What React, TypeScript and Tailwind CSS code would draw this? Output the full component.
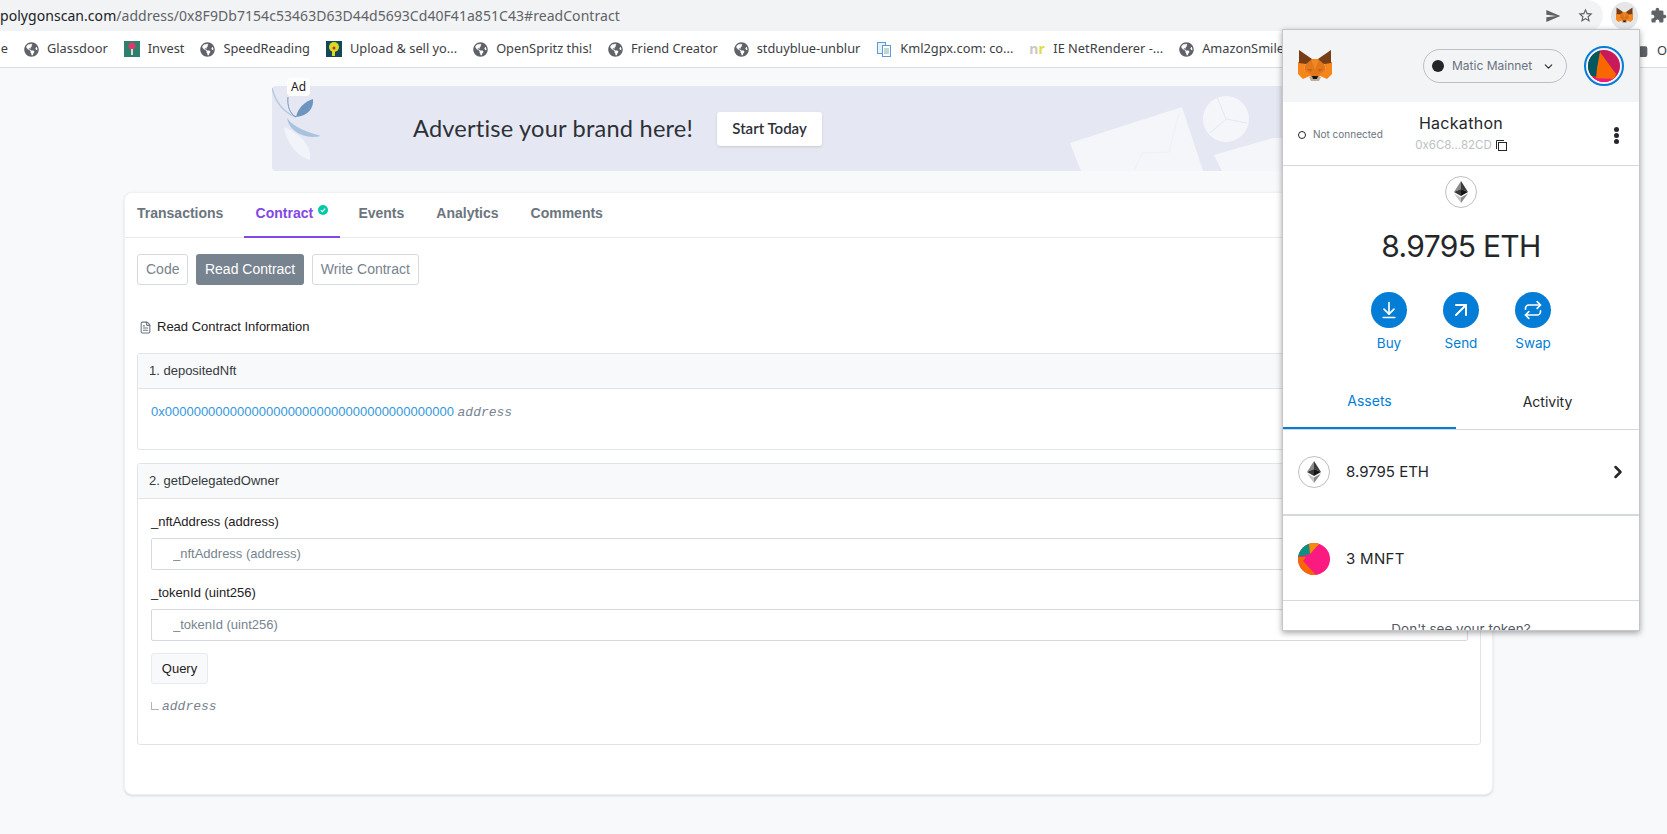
import { ArrowDownToLine, ArrowUpRight, ChevronDown, ChevronRight, FileText, Folder, Repeat } from "lucide-react";
import { FaGlobeAmericas } from "react-icons/fa";

const mainTabs = ["Events", "Analytics", "Comments"];

function Globe() {
  return <FaGlobeAmericas className="w-[15px] h-[15px] shrink-0 text-[#5f6368]" />;
}

function Fox({ size }: { size: number }) {
  return (
    <svg width={size} height={size} viewBox="0 0 34 32">
      <polygon points="13,9 21,9 26,12 28,20 21,27 13,27 6,20 8,12" fill="#e2761b" />
      <polygon points="0,12 8,12 6,20 14,25 5,29 0,24" fill="#f6851b" />
      <polygon points="34,12 26,12 28,20 20,25 29,29 34,24" fill="#f6851b" />
      <polygon points="13,9 17,20 21,9" fill="#f0881f" />
      <polygon points="1,0 14,9 8,14 1,13" fill="#763d16" />
      <polygon points="33,0 20,9 26,14 33,13" fill="#763d16" />
      <polygon points="9,19 14,19 13,22" fill="#cd6116" />
      <polygon points="25,19 20,19 21,22" fill="#cd6116" />
      <polygon points="11,27 23,27 21,31 13,31" fill="#c0ad9e" />
      <polygon points="14,26 20,26 19,29 15,29" fill="#161616" />
    </svg>
  );
}

function EthLogo() {
  return (
    <svg width="14" height="22" viewBox="0 0 14 22">
      <polygon points="7,0 0,11 7,8" fill="#8a8a8a" />
      <polygon points="7,0 14,11 7,8" fill="#3c3c3b" />
      <polygon points="0,11 7,15 7,8" fill="#393939" />
      <polygon points="14,11 7,15 7,8" fill="#141414" />
      <polygon points="0,12.5 7,22 7,16.5" fill="#c5c5c5" />
      <polygon points="14,12.5 7,22 7,16.5" fill="#8a8a8a" />
    </svg>
  );
}

function EthBadge() {
  return (
    <div className="w-8 h-8 rounded-full border border-[#bbc0c5] flex items-center justify-center">
      <EthLogo />
    </div>
  );
}

function ActionButton({ label, children }: { label: string; children: React.ReactNode }) {
  return (
    <div className="w-9 flex flex-col items-center">
      <div className="w-9 h-9 rounded-full bg-[#037dd6] flex items-center justify-center text-white">{children}</div>
      <span className="mt-[5px] text-[13.5px] leading-5 text-[#037dd6]">{label}</span>
    </div>
  );
}

function BrowserBar() {
  return (
    <div className="h-[31px] flex items-center bg-white">
      <div className="w-[1604px] h-full bg-[#f1f3f4] rounded-r-[16px] flex items-center overflow-hidden relative">
        <span className="text-[14px] tracking-[0.05px] text-[#5f6368] font-['Noto_Sans',sans-serif] whitespace-nowrap">
          <span className="text-[#202124]">polygonscan.com</span>/address/0x8F9Db7154c53463D63D44d5693Cd40F41a851C43#readContract
        </span>
        <div className="ml-auto mr-[9px] flex items-center gap-4">
          <svg width="16" height="16" viewBox="0 0 24 24" fill="#5f6368">
            <path d="M2.01 21L23 12 2.01 3 2 10l15 2-15 2z" />
          </svg>
          <svg width="17" height="17" viewBox="0 0 24 24" fill="#5f6368">
            <path d="M22 9.24l-7.19-.62L12 2 9.19 8.63 2 9.24l5.46 4.73L5.82 21 12 17.27 18.18 21l-1.63-7.03L22 9.24zM12 15.4l-3.76 2.27 1-4.28-3.32-2.88 4.38-.38L12 6.1l1.71 4.04 4.38.38-3.32 2.88 1 4.28L12 15.4z" />
          </svg>
        </div>
      </div>
      <div className="ml-2 w-[27px] h-[28px] rounded-full bg-[#e4e6e8] flex items-center justify-center">
        <Fox size={17} />
      </div>
      <svg className="ml-[12px]" width="17" height="17" viewBox="0 0 24 24" fill="#5f6368">
        <path d="M20.5 11H19V7c0-1.1-.9-2-2-2h-4V3.5C13 2.12 11.88 1 10.5 1S8 2.12 8 3.5V5H4c-1.1 0-1.99.9-1.99 2v3.8H3.5c1.49 0 2.7 1.21 2.7 2.7s-1.21 2.7-2.7 2.7H2V20c0 1.1.9 2 2 2h3.8v-1.5c0-1.49 1.21-2.7 2.7-2.7 1.49 0 2.7 1.21 2.7 2.7V22H17c1.1 0 2-.9 2-2v-4h1.5c1.38 0 2.5-1.12 2.5-2.5S21.88 11 20.5 11z" />
      </svg>
    </div>
  );
}

function Bookmark({ icon, label }: { icon: React.ReactNode; label: string }) {
  return (
    <div className="flex items-center gap-2 shrink-0">
      {icon}
      <span>{label}</span>
    </div>
  );
}

function BookmarksBar() {
  return (
    <div className="relative h-[37px] bg-white border-b border-[#dadce0] flex items-center gap-4 pl-0 text-[12.8px] text-[#3c4043] font-['Noto_Sans',sans-serif] whitespace-nowrap overflow-hidden">
      <span className="w-[8px] overflow-hidden flex justify-end">e</span>
      <Bookmark icon={<Globe />} label="Glassdoor" />
      <Bookmark
        icon={
          <svg width="16" height="16" viewBox="0 0 16 16">
            <rect width="16" height="16" fill="#2f7f6f" />
            <circle cx="8" cy="5" r="3.5" fill="#e0386a" />
            <rect x="7" y="8" width="2" height="6" fill="#cfe3da" />
          </svg>
        }
        label="Invest"
      />
      <Bookmark icon={<Globe />} label="SpeedReading" />
      <Bookmark
        icon={
          <svg width="16" height="16" viewBox="0 0 16 16">
            <rect width="16" height="16" fill="#17465a" />
            <circle cx="8" cy="6" r="5" fill="#d7dc1e" />
            <rect x="6" y="10" width="3" height="5" fill="#d7dc1e" />
            <circle cx="8" cy="7" r="1.5" fill="#d3262e" />
          </svg>
        }
        label="Upload & sell yo..."
      />
      <Bookmark icon={<Globe />} label="OpenSpritz this!" />
      <Bookmark icon={<Globe />} label="Friend Creator" />
      <Bookmark icon={<Globe />} label="stduyblue-unblur" />
      <Bookmark
        icon={
          <svg width="16" height="16" viewBox="0 0 16 16" fill="none" stroke="#5b9bd5">
            <rect x="1.5" y="1.5" width="8" height="11" fill="#e8f1fa" />
            <rect x="6.5" y="4.5" width="8" height="11" fill="#fff" />
            <path d="M8 8h5M8 10h5M8 12h5" stroke="#8aa" />
          </svg>
        }
        label="Kml2gpx.com: co..."
      />
      <Bookmark
        icon={
          <span className="w-4 font-bold text-[14px] leading-4 text-[#c9c9c9]">
            n<span className="text-[#e3dc3a]">r</span>
          </span>
        }
        label="IE NetRenderer -..."
      />
      <Bookmark icon={<Globe />} label="AmazonSmile" />
      <div className="absolute left-[1632px] top-[10px] flex items-center gap-[9px]">
        <Folder className="w-4 h-4 text-[#5f6368] fill-[#5f6368]" />
        <span>Other bookmarks</span>
      </div>
    </div>
  );
}

function AdBanner() {
  return (
    <div className="relative ml-[272px] w-[1072px] h-[85px] bg-[#e5e8f2] rounded-[4px] flex items-center">
      <svg className="absolute left-0 top-0" width="60" height="85" viewBox="0 0 60 85" fill="none">
        <path d="M0 2C3 14 10 26 24 31" stroke="#b5cbe2" strokeWidth="1.5" />
        <path d="M16 11C15 20 18 28 24 31" stroke="#6e95bd" />
        <path d="M41 13C42 22 36 30 24 31C26 22 32 16 41 13z" fill="#6e95bd" />
        <path d="M15 32C17 44 30 54 49 50C36 46 22 42 15 32z" fill="#a9c3de" />
        <path d="M12 41C14 55 24 70 38 74C40 60 28 48 12 41z" fill="#f1f5fa" />
      </svg>
      <span className="absolute left-[15px] top-[-8px] w-[23px] h-[18px] rounded-[4px] bg-white text-[12px] leading-[18px] text-center text-[#1e2022] font-['Noto_Sans',sans-serif]">
        Ad
      </span>
      <span className="ml-[141px] mb-[2px] text-[23.6px] leading-8 text-[#2d3137] font-['Lato',sans-serif] tracking-[0.2px]">
        Advertise your brand here!
      </span>
      <span className="ml-[24px] w-[105px] h-[34px] bg-white rounded-[3px] shadow-sm text-[15px] font-semibold text-[#2d3137] flex items-center justify-center font-['Lato',sans-serif]">
        Start Today
      </span>
      <svg className="absolute left-[795px] top-0" width="277" height="85" viewBox="0 0 277 85">
        <polygon points="3,57 115,21 136,85 14,85" fill="#f5f6fa" />
        <path d="M67 85L75 67L102 66L112 27" stroke="#eef0f7" fill="none" />
        <circle cx="159" cy="33" r="23" fill="#f5f6fa" />
        <path d="M159 33L150 11M159 33L180 37M159 33L143 47" stroke="#e5e8f2" fill="none" />
        <polygon points="147,69 206,52 277,52 277,85 155,85" fill="#f5f6fa" />
      </svg>
    </div>
  );
}

function Panel({ title, children }: { title: string; children: React.ReactNode }) {
  return (
    <div className="border border-[#e2e5e8] rounded-[3px] overflow-hidden">
      <div className="h-[35px] px-[11px] bg-[#f8f9fa] border-b border-[#e2e5e8] flex items-center text-[13px] text-[#343a40]">
        {title}
      </div>
      {children}
    </div>
  );
}

function ArgField({ label }: { label: string }) {
  return (
    <>
      <div className="h-5 flex items-center text-[13px] text-[#1e2022]">{label}</div>
      <input
        readOnly
        placeholder={label}
        className="mt-[6px] w-full h-[32px] pl-[21px] pb-[2px] border border-[#d5dae2] rounded-[2px] bg-white text-[13px] outline-none placeholder:text-[#77838f]"
      />
    </>
  );
}

function ContractCard() {
  return (
    <div className="ml-[124px] mt-[21px] w-[1369px] h-[603px] bg-white rounded-[8px] border border-[#eef0f5] shadow-sm">
      <div className="h-[45px] pl-3 pb-[3px] border-b border-[#e7eaf3] flex items-center text-[14px] font-bold text-[#6c757e]">
        <span>Transactions</span>
        <div className="relative ml-[21px] h-[45px] -mb-[3px] pb-[1px] w-[96px] flex items-center justify-center border-b-2 border-[#8247e5] pr-[16px] text-[#8247e5]">
          Contract
          <svg className="absolute right-[12px] top-[12px]" width="10" height="10" viewBox="0 0 10 10">
            <circle cx="5" cy="5" r="5" fill="#00c9a7" />
            <path d="M2.8 5.1l1.6 1.5 2.8-2.9" stroke="#fff" strokeWidth="1.2" fill="none" />
          </svg>
        </div>
        {mainTabs.map((tab, i) => (
          <span key={tab} className={i === 0 ? "ml-[18px]" : "ml-8"}>
            {tab}
          </span>
        ))}
      </div>
      <div className="pl-3 pr-[11px]">
        <div className="mt-4 flex gap-2 text-[14px]">
          <span className="h-[31px] px-2 flex items-center border border-[#d5dae2] rounded-[3px] text-[#77838f]">Code</span>
          <span className="h-[31px] px-[8.5px] flex items-center bg-[#77838f] rounded-[3px] text-white">Read Contract</span>
          <span className="h-[31px] px-2 flex items-center border border-[#d5dae2] rounded-[3px] text-[#77838f]">Write Contract</span>
        </div>
        <div className="mt-[32px] h-5 flex items-center gap-[5px] pl-[2px] text-[13px] text-[#1e2022]">
          <FileText className="w-[13px] h-[13px] text-[#6c757e]" />
          <span>Read Contract Information</span>
        </div>
        <div className="mt-4">
          <Panel title="1. depositedNft">
            <div className="h-[60px] px-[13px] pt-[13px] text-[13px] leading-5">
              <span className="text-[#3498db]">0x0000000000000000000000000000000000000000</span>{" "}
              <span className="italic text-[#77838f] font-['Liberation_Mono',monospace]">address</span>
            </div>
          </Panel>
        </div>
        <div className="mt-[13px]">
          <Panel title="2. getDelegatedOwner">
            <div className="h-[245px] pl-[13px] pr-3 pt-[13px]">
              <ArgField label="_nftAddress (address)" />
              <div className="mt-[13px]">
                <ArgField label="_tokenId (uint256)" />
              </div>
              <span className="mt-[12px] w-[57px] h-[31px] flex items-center justify-center border border-[#e7eaf3] rounded-[3px] bg-[#f8f9fa] text-[13px] text-[#1e2022]">
                Query
              </span>
              <div className="mt-[13px] flex items-center gap-[3px] text-[13px] italic text-[#77838f] font-['Liberation_Mono',monospace]">
                <span className="w-2 h-2 -mt-[2px] border-l border-b border-[#adb5bd]" />
                address
              </div>
            </div>
          </Panel>
        </div>
      </div>
    </div>
  );
}

function WalletPopup() {
  return (
    <div className="absolute left-[1282px] top-[29px] w-[358px] h-[602px] bg-white border border-[#c4c6c9] shadow-[0_2px_6px_rgba(0,0,0,0.35)] overflow-hidden font-['Inter',sans-serif] text-[#24272a]">
      <div className="h-[72px] bg-[#f2f4f6] flex items-center pl-[15px] pr-[15px]">
        <Fox size={34} />
        <div className="ml-[91px] w-[144px] h-[34px] rounded-full border border-[#bbc0c5] flex items-center pl-[8px] gap-[8px]">
          <span className="w-3 h-3 rounded-full bg-[#24272a]" />
          <span className="text-[12px] text-[#6a737d]">Matic Mainnet</span>
          <ChevronDown className="ml-[2px] w-[13px] h-[13px] text-[#24272a]" />
        </div>
        <div className="ml-auto w-10 h-10 rounded-full border-2 border-[#037dd6] flex items-center justify-center">
          <svg width="32" height="32" viewBox="0 0 32 32">
            <clipPath id="avatar">
              <circle cx="16" cy="16" r="16" />
            </clipPath>
            <g clipPath="url(#avatar)">
              <rect width="32" height="32" fill="#c81a5a" />
              <polygon points="0,0 12,0 10,26 0,26" fill="#01585e" />
              <polygon points="12,2 28,24 26,29 8,29 9,18" fill="#f96800" />
              <polygon points="0,28 32,29 32,32 0,32" fill="#f0197d" />
            </g>
          </svg>
        </div>
      </div>
      <div className="relative h-[64px] border-b border-[#d6d9dc] flex flex-col items-center">
        <div className="absolute left-[15px] top-[25px] flex items-center gap-[7px] text-[10px] text-[#6a737d]">
          <span className="w-2 h-2 rounded-full border border-[#24272a]" />
          Not connected
        </div>
        <span className="mt-[11px] text-[16px] leading-5 tracking-[0.3px]">Hackathon</span>
        <div className="mt-[4px] flex items-center gap-[4px] text-[11.5px] text-[#bbc0c5]">
          0x6C8...82CD
          <svg width="11" height="11" viewBox="0 0 11 11" fill="none" stroke="#24272a">
            <path d="M.5 9V.5H8" />
            <rect x="2.5" y="2.5" width="8" height="8" />
          </svg>
        </div>
        <div className="absolute left-[331px] top-[25px] flex flex-col gap-[1px]">
          <span className="w-[5px] h-[5px] rounded-full bg-[#24272a]" />
          <span className="w-[5px] h-[5px] rounded-full bg-[#24272a]" />
          <span className="w-[5px] h-[5px] rounded-full bg-[#24272a]" />
        </div>
      </div>
      <div className="h-[263px] flex flex-col items-center">
        <div className="mt-[10px]">
          <EthBadge />
        </div>
        <span className="mt-[18px] text-[30px] leading-10 tracking-[-0.66px]">8.9795 ETH</span>
        <div className="mt-[26px] flex gap-9">
          <ActionButton label="Buy">
            <ArrowDownToLine className="w-5 h-5" />
          </ActionButton>
          <ActionButton label="Send">
            <ArrowUpRight className="w-6 h-6" />
          </ActionButton>
          <ActionButton label="Swap">
            <Repeat className="w-5 h-5" />
          </ActionButton>
        </div>
        <div className="mt-auto w-full h-[58px] flex text-[14px] leading-5">
          <div className="w-[173px] pt-[3px] border-b-2 border-[#037dd6] text-[#037dd6] flex items-center justify-center">Assets</div>
          <div className="flex-1 pt-[3px] flex items-center justify-center">Activity</div>
        </div>
      </div>
      <div className="h-[87px] border-t border-[#d6d9dc] border-b-2 flex items-center px-[15px] gap-[16px] text-[15px]">
        <EthBadge />
        <span>8.9795 ETH</span>
        <ChevronRight className="ml-auto -mr-[4px] w-5 h-5 stroke-[3]" />
      </div>
      <div className="h-[85px] pt-[2px] border-b border-[#d6d9dc] flex items-center px-[15px] gap-[16px] text-[15px] tracking-[0.3px]">
        <svg width="32" height="32" viewBox="0 0 32 32">
          <clipPath id="token">
            <circle cx="16" cy="16" r="16" />
          </clipPath>
          <g clipPath="url(#token)">
            <rect width="32" height="32" fill="#fb1a80" />
            <polygon points="11,0 0,0 0,14 12,11" fill="#0b917f" />
            <polygon points="11,0 22,0 12,11" fill="#f58b0a" />
            <polygon points="0,14 8,14 5,18 18,32 0,32" fill="#f96800" />
          </g>
        </svg>
        <span>3 MNFT</span>
      </div>
      <div className="mt-[18px] text-center text-[13.5px] leading-5 text-[#535a61]">Don't see your token?</div>
    </div>
  );
}

export default function App() {
  return (
    <div className="relative h-[834px] overflow-hidden bg-[#f8f9fa] font-['Liberation_Sans',sans-serif]">
      <BrowserBar />
      <BookmarksBar />
      <div className="pt-[18px]">
        <AdBanner />
        <ContractCard />
      </div>
      <WalletPopup />
    </div>
  );
}
